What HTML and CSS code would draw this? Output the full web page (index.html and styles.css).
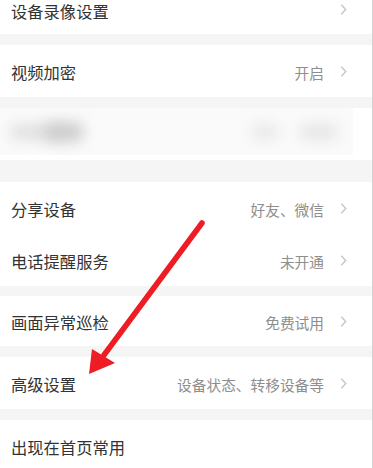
FILE: index.html
```html
<!DOCTYPE html>
<html lang="zh">
<head>
<meta charset="utf-8">
<link rel="stylesheet" href="styles.css">
</head>
<body>
<div class="page">
  <div class="list">
    <div class="row first"><span class="label">设备录像设置</span><svg class="chev" viewBox="0 0 8 14"><path d="M1.5 1.5 L6.5 7 L1.5 12.5"/></svg></div>
    <div class="sep"></div>
    <div class="row"><span class="label">视频加密</span><span class="value">开启</span><svg class="chev" viewBox="0 0 8 14"><path d="M1.5 1.5 L6.5 7 L1.5 12.5"/></svg></div>
    <div class="sep"></div>
    <div class="row blurrow">
      <div class="blurbox">
        <span class="blob b1"></span>
        <span class="blob b2"></span>
        <span class="blob b3"></span>
        <span class="blob b4"></span>
      </div>
    </div>
    <div class="sep wide"></div>
    <div class="row"><span class="label">分享设备</span><span class="value">好友、微信</span><svg class="chev" viewBox="0 0 8 14"><path d="M1.5 1.5 L6.5 7 L1.5 12.5"/></svg></div>
    <div class="row"><span class="label">电话提醒服务</span><span class="value">未开通</span><svg class="chev" viewBox="0 0 8 14"><path d="M1.5 1.5 L6.5 7 L1.5 12.5"/></svg></div>
    <div class="sep thin"></div>
    <div class="row short"><span class="label">画面异常巡检</span><span class="value">免费试用</span><svg class="chev" viewBox="0 0 8 14"><path d="M1.5 1.5 L6.5 7 L1.5 12.5"/></svg></div>
    <div class="sep"></div>
    <div class="row"><span class="label">高级设置</span><span class="value">设备状态、转移设备等</span><svg class="chev" viewBox="0 0 8 14"><path d="M1.5 1.5 L6.5 7 L1.5 12.5"/></svg></div>
    <div class="sep"></div>
    <div class="row"><span class="label">出现在首页常用</span></div>
  </div>
  <svg class="arrow" viewBox="0 0 373 468" width="373" height="468">
    <line x1="202" y1="223" x2="104" y2="355" class="shaft"/>
    <polygon points="89,374 92,349 115,363" class="head"/>
  </svg>
</div>
</body>
</html>
```

FILE: styles.css
```css
html, body {
  margin: 0;
  padding: 0;
  background: #ffffff;
}
body {
  font-family: "Noto Sans CJK SC", "Noto Sans", sans-serif;
}
.page {
  position: relative;
  width: 372px;
  height: 468px;
  overflow: hidden;
  border-right: 1px solid #d2d2d2;
  background: #ffffff;
}
.list {
  display: flex;
  flex-direction: column;
}
.row {
  display: flex;
  align-items: center;
  height: 52px;
  padding: 0 25px 0 11px;
  background: #ffffff;
  flex-shrink: 0;
}
.row.first {
  height: 34px;
  align-items: flex-start;
}
.row.first .label {
  line-height: 20px;
  padding-top: 1px;
}
.row.first .chev {
  margin-top: 3px;
}
.row.short {
  height: 50px;
}
.label {
  font-size: 16.3px;
  color: #333333;
  flex: 1;
  padding-top: 2px;
}
.value {
  font-size: 14.7px;
  color: #8e8e8e;
  margin-right: 16px;
  padding-top: 2px;
}
.chev {
  width: 7px;
  height: 13px;
  fill: none;
  stroke: #c6c6c6;
  stroke-width: 1.6;
}
.sep {
  height: 11px;
  background: #f5f5f5;
  flex-shrink: 0;
}
.sep.wide {
  height: 22px;
}
.sep.thin {
  height: 10px;
}
.blurrow {
  padding: 0;
  align-items: flex-start;
}
.blurbox {
  position: relative;
  width: 353px;
  height: 47px;
  background: #fafafa;
  overflow: hidden;
}
.blob {
  position: absolute;
  border-radius: 12px;
  filter: blur(7px);
}
.b1 {
  left: 10px;
  top: 17px;
  width: 48px;
  height: 14px;
  background: #dddddd;
}
.b2 {
  left: 44px;
  top: 14px;
  width: 40px;
  height: 20px;
  background: #cccccc;
}
.b3 {
  left: 252px;
  top: 17px;
  width: 26px;
  height: 14px;
  background: #e6e6e6;
}
.b4 {
  left: 300px;
  top: 17px;
  width: 38px;
  height: 14px;
  background: #e3e3e3;
}
.arrow {
  position: absolute;
  left: 0;
  top: 0;
  pointer-events: none;
}
.shaft {
  stroke: #ee1c25;
  stroke-width: 5.5;
  stroke-linecap: round;
}
.head {
  fill: #ee1c25;
}
```
